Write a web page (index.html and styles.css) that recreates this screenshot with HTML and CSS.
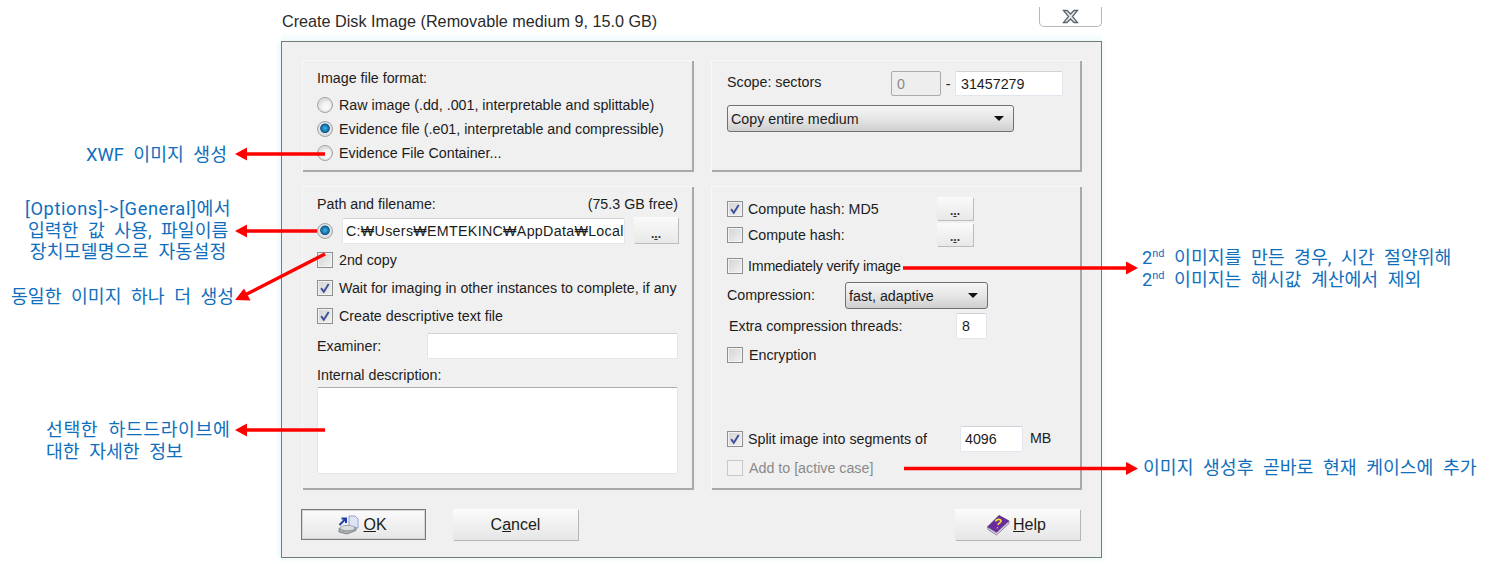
FILE: index.html
```html
<!DOCTYPE html>
<html lang="ko">
<head>
<meta charset="utf-8">
<title>Create Disk Image</title>
<link rel="stylesheet" href="styles.css">
</head>
<body>
<svg width="0" height="0" class="defs">
  <symbol id="tick" viewBox="0 0 16 16"><path d="M3.6 8.2 6.6 12.4 12.2 3.4" fill="none" stroke="#3f4f9a" stroke-width="2.2"/></symbol>
</svg>
<div class="stage">
  <div class="window">
    <div class="titlebar">
      <div class="title">Create Disk Image (Removable medium 9, 15.0 GB)</div>
      <div class="close">
        <svg width="21" height="15" viewBox="0 0 20 15"><path d="M3 1.500h3.500L10 5l3.500-3.500H17L12 7.500l5 6h-3.500L10 10l-3.500 3.500H3l5-6z" fill="#e4e6ea" stroke="#5d6470" stroke-width="1.300"/></svg>
      </div>
    </div>
    <div class="dialog">
      <div class="panels">
        <section class="panel fmt">
          <div class="row h24">Image file format:</div>
          <div class="row h24 mt3"><span class="radio"></span><span class="lbl">Raw image (.dd, .001, interpretable and splittable)</span></div>
          <div class="row h24"><span class="radio on"></span><span class="lbl">Evidence file (.e01, interpretable and compressible)</span></div>
          <div class="row h24"><span class="radio"></span><span class="lbl">Evidence File Container...</span></div>
        </section>
        <section class="panel scope">
          <div class="row h25">
            <span class="scope-label">Scope: sectors</span>
            <span class="field off w50">0</span>
            <span class="dash">-</span>
            <span class="field w108">31457279</span>
          </div>
          <div class="select w287 mt9"><span>Copy entire medium</span><i class="caret"></i></div>
        </section>
        <section class="panel path">
          <div class="row h24 between"><span>Path and filename:</span><span>(75.3 GB free)</span></div>
          <div class="row h26 mt2">
            <span class="radio on"></span>
            <span class="field w283 ml9 pathname">C:₩Users₩EMTEKINC₩AppData₩Local</span>
            <span class="browse w44 ml9">.<u>.</u>.</span>
          </div>
          <div class="row h28 mt2"><span class="check"></span><span class="lbl">2nd copy</span></div>
          <div class="row h28"><span class="check"><svg class="tick"><use href="#tick"/></svg></span><span class="lbl">Wait for imaging in other instances to complete, if any</span></div>
          <div class="row h28"><span class="check"><svg class="tick"><use href="#tick"/></svg></span><span class="lbl">Create descriptive text file</span></div>
          <div class="row h26 mt3"><span class="examiner-label">Examiner:</span><span class="field w251"></span></div>
          <div class="row h24 mt4">Internal description:</div>
          <div class="field memo"></div>
        </section>
        <section class="panel opts">
          <div class="row h23"><span class="check"><svg class="tick"><use href="#tick"/></svg></span><span class="lbl hash">Compute hash: MD5</span><span class="browse w36">.<u>.</u>.</span></div>
          <div class="row h23 mt3"><span class="check"></span><span class="lbl hash">Compute hash:</span><span class="browse w36">.<u>.</u>.</span></div>
          <div class="row h24 mt8"><span class="check"></span><span class="lbl tight">Immediately verify image</span></div>
          <div class="row h27 mt4"><span class="comp-label">Compression:</span><div class="select w143"><span>fast, adaptive</span><i class="caret"></i></div></div>
          <div class="row h26 mt4 inset2"><span class="threads-label">Extra compression threads:</span><span class="field w31">8</span></div>
          <div class="row h24 mt4"><span class="check"></span><span class="lbl">Encryption</span></div>
          <div class="row h26 mt59"><span class="check"><svg class="tick"><use href="#tick"/></svg></span><span class="lbl split">Split image into segments of</span><span class="field w63">4096</span><span class="unit">MB</span></div>
          <div class="row h24 mt4 disabled"><span class="check"></span><span class="lbl">Add to [active case]</span></div>
        </section>
      </div>
      <div class="actions">
        <div class="group">
          <button class="btn default with-icon">
            <svg width="23" height="20" viewBox="0 0 23 20">
              <path d="M12 1h6l3 3v9h-9z" fill="#dfe3f6" stroke="#9aa3cc"/>
              <path d="M2 13.500 10 11l9 1.500v3L10 19l-8-2z" fill="#a9adb0" stroke="#72777b" stroke-width=".8"/>
              <ellipse cx="10.500" cy="13" rx="7.500" ry="2.600" fill="#dcdfe0" stroke="#8b9094" stroke-width=".7"/>
              <path d="M2.500 10 8 4.500M4.500 3.500H9V8" fill="none" stroke="#1f3fa8" stroke-width="2"/>
            </svg>
            <span><u>O</u>K</span>
          </button>
          <button class="btn"><span>C<u>a</u>ncel</span></button>
        </div>
        <button class="btn with-icon">
          <svg width="24" height="22" viewBox="0 0 24 22">
            <path d="M1.500 13 13 1.500 23 7 10.500 20z" fill="#6a2ba0" stroke="#47206f" stroke-width=".8"/>
            <path d="M1.500 13 10.500 18.500 23 7v2.500L10.500 21 2 15.500z" fill="#d8d4e0" stroke="#6e5b8a" stroke-width=".7"/>
            <path d="M9.500 7.500c1-2.500 5-2.700 5.500-.7.400 1.700-3 2.300-3 4.200M11 13.500l.6.600" fill="none" stroke="#f3e23a" stroke-width="1.700"/>
          </svg>
          <span><u>H</u>elp</span>
        </button>
      </div>
    </div>
  </div>

  <svg class="arrows" width="1491" height="564" viewBox="0 0 1491 564">
    <g stroke="#f00" stroke-width="3.500" fill="#f00">
      <path d="M325 154H244"/><path d="M235 154l12-6.500v13z" stroke="none"/>
      <path d="M317 231H244"/><path d="M235 231l12-6.500v13z" stroke="none"/>
      <path d="M325 254 243 296"/><path d="M235 300 244 288.500l6.500 12z" stroke="none"/>
      <path d="M325 430H244"/><path d="M235 430l12-6.500v13z" stroke="none"/>
      <path d="M903 268H1130"/><path d="M1138 268l-12-6.500v13z" stroke="none"/>
      <path d="M904 468.500H1130"/><path d="M1138 468.500l-12-6.500v13z" stroke="none"/>
    </g>
  </svg>

  <p class="note n-xwf">XWF 이미지 생성</p>
  <p class="note n-opt"><span class="spread-lg">[Options]-&gt;[General]에서</span><br>입력한 값 사용, 파일이름<br><span class="spread">장치모델명으로 자동설정</span></p>
  <p class="note n-copy">동일한 이미지 하나 더 생성</p>
  <p class="note n-desc"><span class="spread-lg">선택한 하드드라이브에</span><br>대한 자세한 정보</p>
  <p class="note n-hash">2<sup>nd</sup> 이미지를 만든 경우, 시간 절약위해<br>2<sup>nd</sup> 이미지는 해시값 계산에서 제외</p>
  <p class="note n-case">이미지 생성후 곧바로 현재 케이스에 추가</p>
</div>
</body>
</html>
```
FILE: styles.css
```css
* { box-sizing: border-box; }
html, body { margin: 0; padding: 0; background: #fff; }
body { font-family: "Liberation Sans", Arial, sans-serif; font-size: 14.250px; color: #1c1c1c; }
.defs { position: absolute; }
.stage { position: relative; width: 1491px; height: 564px; overflow: hidden; }

.window { width: 821px; margin-left: 281px; }
.titlebar { display: flex; justify-content: space-between; align-items: flex-start; height: 41px; padding-left: 1px; background: linear-gradient(#fff 0, #fff 32px, #effbfd 41px); }
.title { margin-top: 12px; font-size: 16.200px; line-height: 18px; color: #2a2a2a; }
.close { display: flex; justify-content: center; align-items: center; width: 63px; height: 20px; margin-top: 7px; border: 1px solid #b4b8bc; border-top: 0; border-radius: 0 0 5px 5px; background: #fff; }

.dialog { height: 517px; border: 1px solid #727c78; padding: 18px 19px 0 20px; background: #f0f0f0; box-shadow: -3px 0 4px #eef8fb, 3px 0 4px #f3fbfc, 0 3px 4px #f3fbfc; }
.panels { display: grid; grid-template-columns: 392px 371px; grid-template-rows: 112px 304px; column-gap: 17px; row-gap: 14px; }
.panel { padding-left: 15px; padding-right: 16px; box-shadow: inset 1px 1px 0 #f8f8f8, inset -2px -2px 0 #a9a9a9; }
.fmt, .path { padding-top: 6px; }
.scope, .opts { padding-top: 11px; padding-left: 16px; }

.row { display: flex; align-items: center; white-space: nowrap; }
.between { justify-content: space-between; }
.h23 { height: 23px; } .h24 { height: 24px; } .h25 { height: 25px; } .h26 { height: 26px; } .h27 { height: 27px; } .h28 { height: 28px; }
.mt2 { margin-top: 2px; } .mt3 { margin-top: 3px; } .mt4 { margin-top: 4px; } .mt8 { margin-top: 8px; } .mt9 { margin-top: 9px; } .mt59 { margin-top: 59px; }
.ml9 { margin-left: 9px; }
.inset2 { padding-left: 2px; }

.lbl { margin-left: 6px; }
.tight { letter-spacing: -.2px; margin-left: 5px; }
.hash { width: 189px; margin-left: 5px; }
.split { width: 212px; margin-left: 5px; }
.disabled { color: #8a8a8a; }
.disabled .check { background: #f2f2f2; border-color: #c8c8c8; }
.scope-label { width: 164px; padding-bottom: 3px; }
.examiner-label { width: 110px; }
.comp-label { width: 118px; padding-bottom: 1px; }
.threads-label { width: 227px; padding-bottom: 1px; }
.dash { width: 14px; text-align: center; }
.unit { margin-left: 7px; margin-top: -2px; }

.radio { flex: none; width: 16px; height: 16px; border-radius: 50%; border: 1px solid #a0a2a4; background: radial-gradient(circle at 60% 65%, #fbfbfb 0, #f0f0f0 40%, #bdbdbd 100%); box-shadow: inset 0 0 0 1px #e4e4e4; }
.radio.on { background: radial-gradient(circle at 50% 45%, #45b5e8 0, #0f6fa6 35%, #0d4f80 42%, #e4e6e8 50%, #bdbdbd 100%); }
.check { flex: none; width: 16px; height: 16px; border: 1px solid #8e8f8f; background: linear-gradient(135deg, #d2d3d4, #f2f2f2); box-shadow: inset 0 0 0 1px #f3f3f3; }
.tick { display: block; width: 14px; height: 14px; }

.field { display: flex; align-items: center; flex: none; height: 100%; padding-left: 5px; background: #fff; border: 1px solid #e2e6ec; border-top-color: #cfd2d6; border-radius: 2px; }
.pathname { padding-left: 3px; letter-spacing: .3px; }
.off { background: #eee; border-color: #a8aaac; color: #8a8a8a; }
.w31 { width: 31px; } .w50 { width: 50px; } .w63 { width: 63px; padding-left: 4px; } .w108 { width: 108px; } .w251 { width: 251px; } .w283 { width: 283px; }
.memo { width: 361px; height: 87px; border-top-color: #a9abad; }

.browse { flex: none; display: flex; justify-content: center; align-items: flex-end; height: 100%; padding-bottom: 3px; font-size: 12px; line-height: 12px; font-weight: bold; color: #333; background: linear-gradient(#fafafa, #e8e8e8); box-shadow: 1px 1px 0 #bcbcbc; }
.browse u { display: inline-block; }
.w36 { width: 36px; } .w44 { width: 44px; margin-bottom: 2px; }

.select { display: flex; align-items: center; justify-content: space-between; flex: none; height: 27px; padding: 0 9px 0 3px; border: 1px solid #6e7072; border-radius: 3px; background: linear-gradient(#f6f6f6, #e6e6e6 50%, #cfcfcf); }
.w287 { width: 287px; } .w143 { width: 143px; height: 100%; }
.caret { width: 0; height: 0; border: 5px solid transparent; border-top: 5px solid #111; border-bottom: 0; }

.actions { display: flex; justify-content: space-between; margin: 19px 2px 0 -1px; }
.group { display: flex; gap: 27px; }
.btn { display: flex; align-items: center; justify-content: center; gap: 3px; width: 125px; height: 31px; padding: 0; font: inherit; font-size: 16px; color: #1c1c1c; border: 0; background: linear-gradient(#fbfbfb, #e6e6e6); box-shadow: 1px 1px 0 #b5b5b5; }
.btn.with-icon { padding-right: 3px; }
.btn.default { border: 1px solid #77797b; box-shadow: inset 0 0 0 1px #d5d5d5; }

.arrows { position: absolute; left: 0; top: 0; pointer-events: none; }
.note { position: absolute; margin: 0; font-family: Roboto, "Noto Sans CJK KR", sans-serif; font-size: 18.300px; line-height: 21.500px; color: #0f6fbd; white-space: nowrap; word-spacing: 5px; }
.note sup { font-size: 11px; line-height: 0; }
.spread { letter-spacing: .2px; }
.spread-lg { letter-spacing: .6px; }
.n-xwf { right: 1264px; top: 144px; }
.n-opt { left: 25px; top: 198px; text-align: center; }
.n-copy { left: 11px; top: 286px; }
.n-desc { left: 46px; top: 419px; }
.n-hash { left: 1142px; top: 247px; }
.n-case { left: 1143px; top: 457px; }
```
